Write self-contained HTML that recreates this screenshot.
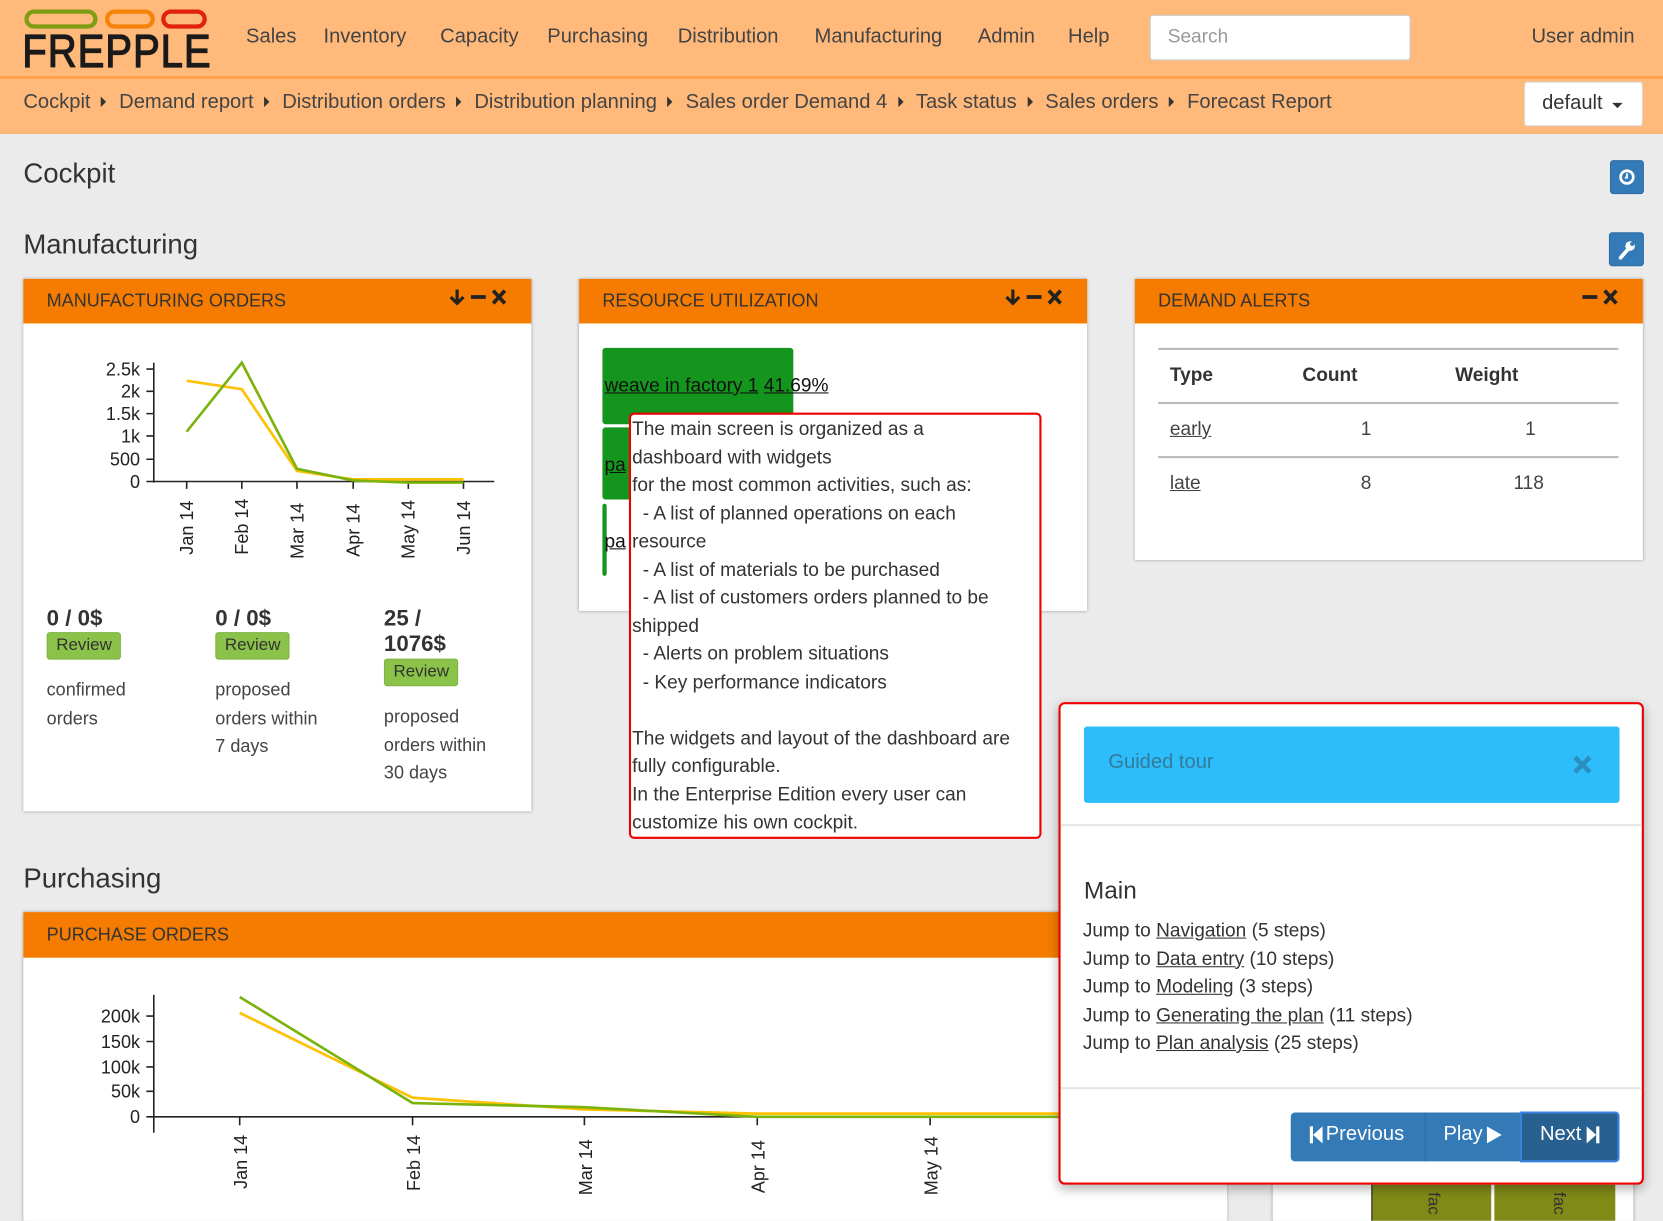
<!DOCTYPE html>
<html><head><meta charset="utf-8"><style>
html,body{margin:0;padding:0;width:1663px;height:1221px;overflow:hidden;background:#ebebeb}
#w{position:absolute;left:0;top:0;width:1568px;height:1151px;overflow:hidden;transform:scale(1.06059);transform-origin:0 0;font-family:"Liberation Sans",sans-serif;color:#333}
.a{position:absolute;white-space:nowrap}
.nav{font-size:19px;color:#444;top:24px}
.bc{font-size:19px;color:#444;top:86px}
.tri{display:inline-block;width:0;height:0;border-top:5px solid transparent;border-bottom:5px solid transparent;border-left:5px solid #333;margin:0 12px 2px 10px;vertical-align:middle}
.wd{position:absolute;background:#fff;box-shadow:0 0 3px rgba(0,0,0,.35)}
.wh{position:absolute;left:0;right:0;top:0;height:42px;background:#f57c00;color:#333;font-size:17px;line-height:42px;padding-left:22px}
.rev{position:absolute;background:#8bc34a;border:1px solid #7cb342;border-radius:3px;font-size:16px;color:#333;padding:3px 8px}
.txt{position:absolute;font-size:17px;line-height:26.5px;color:#444}
.big{position:absolute;font-size:21px;font-weight:bold;color:#333;line-height:24px}
u{text-decoration:underline}
</style></head><body><div id="w">
<div class="a" style="left:0;top:0;width:1568px;height:72px;background:#ffb97a;border-bottom:2px solid #fb9a3c"></div>
<div class="a" style="left:0;top:74px;width:1568px;height:51px;background:#ffb97a;border-bottom:1px solid #f8a45a"></div>
<div class="a" style="left:23px;top:9px;width:69px;height:18px;border:4px solid #7f9d13;border-radius:10px;box-sizing:border-box"></div>
<div class="a" style="left:99px;top:9px;width:47px;height:18px;border:4px solid #f68209;border-radius:10px;box-sizing:border-box"></div>
<div class="a" style="left:152px;top:9px;width:43px;height:18px;border:4px solid #e0210e;border-radius:10px;box-sizing:border-box"></div>
<div class="a" style="left:21px;top:24px;font-size:44px;color:#1a1a1a;letter-spacing:1px;transform:scaleX(0.86);transform-origin:0 0;-webkit-text-stroke:1.2px #1a1a1a">FREPPLE</div>
<div class="a nav" style="left:232px">Sales</div>
<div class="a nav" style="left:305px">Inventory</div>
<div class="a nav" style="left:415px">Capacity</div>
<div class="a nav" style="left:516px">Purchasing</div>
<div class="a nav" style="left:639px">Distribution</div>
<div class="a nav" style="left:768px">Manufacturing</div>
<div class="a nav" style="left:922px">Admin</div>
<div class="a nav" style="left:1007px">Help</div>
<div class="a" style="left:1084px;top:14px;width:246px;height:43px;background:#fff;border:1px solid #ccc;border-radius:3px;box-sizing:border-box"></div>
<div class="a" style="left:1101px;top:24px;font-size:18px;color:#999">Search</div>
<div class="a nav" style="left:1444px">User admin</div>
<div class="a bc" style="left:22px">Cockpit<span class="tri"></span>Demand report<span class="tri"></span>Distribution orders<span class="tri"></span>Distribution planning<span class="tri"></span>Sales order Demand 4<span class="tri"></span>Task status<span class="tri"></span>Sales orders<span class="tri"></span>Forecast Report</div>
<div class="a" style="left:1437px;top:77px;width:112px;height:42px;background:#fff;border:1px solid #ddd;border-radius:3px;box-sizing:border-box"></div>
<div class="a" style="left:1454px;top:87px;font-size:19px;color:#333">default</div>
<div class="a" style="left:1520px;top:97px;width:0;height:0;border-left:5px solid transparent;border-right:5px solid transparent;border-top:5px solid #333"></div>
<div class="a" style="left:22px;top:148px;font-size:26px;color:#333">Cockpit</div>
<div class="a" style="left:1518px;top:151px;width:32px;height:32px;background:#337ab7;border:1px solid #2e6da4;border-radius:3px;box-sizing:border-box"></div>
<svg class="a" style="left:1524px;top:158px" width="20" height="18"><circle cx="10" cy="9" r="6" fill="none" stroke="#fff" stroke-width="2.5"/><path d="M10 5.5V9.5H8" stroke="#fff" stroke-width="1.8" fill="none"/></svg>
<div class="a" style="left:22px;top:215px;font-size:26px;color:#333">Manufacturing</div>
<div class="a" style="left:1517px;top:219px;width:33px;height:32px;background:#337ab7;border:1px solid #2e6da4;border-radius:3px;box-sizing:border-box"></div>
<svg class="a" style="left:1523px;top:225px" width="22" height="22"><path d="M5 18L12 10" stroke="#fff" stroke-width="3.5" stroke-linecap="round"/><circle cx="14" cy="7" r="4.5" fill="#fff"/><circle cx="16" cy="5" r="2" fill="#337ab7"/></svg>

<!-- widget 1 -->
<div class="wd" style="left:22px;top:263px;width:479px;height:502px">
 <div class="wh">MANUFACTURING ORDERS</div>
 <svg class="a" style="left:400px;top:8px" width="60" height="18"><path d="M9 2V15M3 9L9 15L15 9" stroke="#222" stroke-width="3" fill="none"/><path d="M22 9H36" stroke="#222" stroke-width="3.5"/><path d="M43 3L54 15M54 3L43 15" stroke="#222" stroke-width="3.5"/></svg>
 <svg class="a" style="left:0;top:42px" width="479" height="240">
  <g font-size="17" fill="#222" text-anchor="end" font-family="Liberation Sans">
   <text x="110" y="49">2.5k</text><text x="110" y="70">2k</text><text x="110" y="91">1.5k</text><text x="110" y="112">1k</text><text x="110" y="134">500</text><text x="110" y="155">0</text>
  </g>
  <path d="M123 37V150M116 43H123M116 64H123M116 85H123M116 106H123M116 128H123M116 149H444M154 149V156M206 149V156M258 149V156M311 149V156M363 149V156M415 149V156" stroke="#222" stroke-width="1.5" fill="none"/>
  <g font-size="17" fill="#222" font-family="Liberation Sans">
   <text transform="translate(160,218) rotate(-90)">Jan 14</text><text transform="translate(212,218) rotate(-90)">Feb 14</text><text transform="translate(264,222) rotate(-90)">Mar 14</text><text transform="translate(317,220) rotate(-90)">Apr 14</text><text transform="translate(369,222) rotate(-90)">May 14</text><text transform="translate(421,218) rotate(-90)">Jun 14</text>
  </g>
  <polyline points="154,54 206,62 258,139 311,147 363,147 415,147" fill="none" stroke="#ffc000" stroke-width="2.5"/>
  <polyline points="154,102 206,37 258,137 311,148 363,150 415,150" fill="none" stroke="#7cb30b" stroke-width="2.5"/>
 </svg>
 <div class="big" style="left:22px;top:309px">0 / 0$</div>
 <div class="rev" style="left:22px;top:333px">Review</div>
 <div class="txt" style="left:22px;top:375px">confirmed<br>orders</div>
 <div class="big" style="left:181px;top:309px">0 / 0$</div>
 <div class="rev" style="left:181px;top:333px">Review</div>
 <div class="txt" style="left:181px;top:375px">proposed<br>orders within<br>7 days</div>
 <div class="big" style="left:340px;top:309px">25 /<br>1076$</div>
 <div class="rev" style="left:340px;top:358px">Review</div>
 <div class="txt" style="left:340px;top:400px">proposed<br>orders within<br>30 days</div>
</div>

<!-- widget 2 -->
<div class="wd" style="left:546px;top:263px;width:479px;height:313px">
 <div class="wh">RESOURCE UTILIZATION</div>
 <svg class="a" style="left:400px;top:8px" width="60" height="18"><path d="M9 2V15M3 9L9 15L15 9" stroke="#222" stroke-width="3" fill="none"/><path d="M22 9H36" stroke="#222" stroke-width="3.5"/><path d="M43 3L54 15M54 3L43 15" stroke="#222" stroke-width="3.5"/></svg>
 <div class="a" style="left:22px;top:65px;width:180px;height:72px;background:#14961e;border-radius:3px"></div>
 <div class="a" style="left:22px;top:140px;width:40px;height:68px;background:#14961e;border-radius:3px"></div>
 <div class="a" style="left:22px;top:212px;width:4px;height:68px;background:#14961e;border-radius:2px"></div>
 <div class="a" style="left:24px;top:90px;font-size:18px;color:#111"><u>weave in factory 1</u> <u>41.69%</u></div>
 <div class="a" style="left:24px;top:165px;font-size:18px;color:#111"><u>pa</u></div>
 <div class="a" style="left:24px;top:237px;font-size:18px;color:#111"><u>pa</u></div>
</div>

<!-- widget 3 -->
<div class="wd" style="left:1070px;top:263px;width:479px;height:265px">
 <div class="wh">DEMAND ALERTS</div>
 <svg class="a" style="left:420px;top:8px" width="40" height="18"><path d="M2 9H16" stroke="#222" stroke-width="3.5"/><path d="M23 3L34 15M34 3L23 15" stroke="#222" stroke-width="3.5"/></svg>
 <div class="a" style="left:22px;top:65px;width:434px;height:2px;background:#bbb"></div>
 <div class="a" style="left:33px;top:80px;font-size:18px;font-weight:bold">Type</div>
 <div class="a" style="left:158px;top:80px;font-size:18px;font-weight:bold">Count</div>
 <div class="a" style="left:302px;top:80px;font-size:18px;font-weight:bold">Weight</div>
 <div class="a" style="left:22px;top:116px;width:434px;height:2px;background:#bbb"></div>
 <div class="a" style="left:33px;top:131px;font-size:18px;color:#444"><u>early</u></div>
 <div class="a" style="left:213px;top:131px;font-size:18px;color:#444">1</div>
 <div class="a" style="left:368px;top:131px;font-size:18px;color:#444">1</div>
 <div class="a" style="left:22px;top:167px;width:434px;height:2px;background:#bbb"></div>
 <div class="a" style="left:33px;top:182px;font-size:18px;color:#444"><u>late</u></div>
 <div class="a" style="left:213px;top:182px;font-size:18px;color:#444">8</div>
 <div class="a" style="left:357px;top:182px;font-size:18px;color:#444">118</div>
</div>

<!-- Purchasing -->
<div class="a" style="left:22px;top:813px;font-size:26px;color:#333">Purchasing</div>
<div class="wd" style="left:22px;top:860px;width:1135px;height:320px">
 <div class="wh" style="height:43px;line-height:43px">PURCHASE ORDERS</div>
 <svg class="a" style="left:0;top:43px" width="1135" height="260">
  <g font-size="17" fill="#222" text-anchor="end" font-family="Liberation Sans">
   <text x="110" y="61">200k</text><text x="110" y="85">150k</text><text x="110" y="109">100k</text><text x="110" y="132">50k</text><text x="110" y="156">0</text>
  </g>
  <path d="M123 35V165M116 55H123M116 79H123M116 103H123M116 126H123M116 150H990M204 150V158M367 150V158M529 150V158M692 150V158M855 150V158" stroke="#222" stroke-width="1.5" fill="none"/>
  <g font-size="17" fill="#222" font-family="Liberation Sans">
   <text transform="translate(211,218) rotate(-90)">Jan 14</text><text transform="translate(374,220) rotate(-90)">Feb 14</text><text transform="translate(536,224) rotate(-90)">Mar 14</text><text transform="translate(699,222) rotate(-90)">Apr 14</text><text transform="translate(862,224) rotate(-90)">May 14</text>
  </g>
  <polyline points="204,52 367,132 529,143 692,147 990,147" fill="none" stroke="#ffc000" stroke-width="2.5"/>
  <polyline points="204,37 367,137 529,141 692,150 990,150" fill="none" stroke="#7cb30b" stroke-width="2.5"/>
 </svg>
</div>
<div class="wd" style="left:1200px;top:1100px;width:340px;height:80px"></div>
<div class="a" style="left:1293px;top:1117px;width:112px;height:40px;background:#808b17;border-left:1px solid #222"></div>
<div class="a" style="left:1409px;top:1117px;width:114px;height:40px;background:#808b17"></div>
<div class="a" style="left:1360px;top:1124px;font-size:16px;transform:rotate(90deg);transform-origin:0 0">fac</div>
<div class="a" style="left:1478px;top:1124px;font-size:16px;transform:rotate(90deg);transform-origin:0 0">fac</div>

<!-- tooltip -->
<div class="a" style="left:593px;top:389px;width:389px;height:402px;background:#fff;border:2px solid #e00;border-radius:5px;box-sizing:border-box"></div>
<div class="txt" style="left:596px;top:391px;font-size:18px;color:#333;white-space:nowrap">The main screen is organized as a<br>dashboard with widgets<br>for the most common activities, such as:<br>&nbsp;&nbsp;- A list of planned operations on each<br>resource<br>&nbsp;&nbsp;- A list of materials to be purchased<br>&nbsp;&nbsp;- A list of customers orders planned to be<br>shipped<br>&nbsp;&nbsp;- Alerts on problem situations<br>&nbsp;&nbsp;- Key performance indicators<br><br>The widgets and layout of the dashboard are<br>fully configurable.<br>In the Enterprise Edition every user can<br>customize his own cockpit.</div>

<!-- guided tour modal -->
<div class="a" style="left:998px;top:662px;width:552px;height:455px;background:#fff;border:2px solid #e00;border-radius:6px;box-sizing:border-box;box-shadow:0 4px 10px rgba(0,0,0,.3)"></div>
<div class="a" style="left:1022px;top:685px;width:505px;height:72px;background:#2dbdfa;border-radius:3px"></div>
<div class="a" style="left:1045px;top:708px;font-size:19px;color:#337a9a">Guided tour</div>
<svg class="a" style="left:1482px;top:711px" width="20" height="20"><path d="M3 3L17 17M17 3L3 17" stroke="#2a8ec0" stroke-width="4.5"/></svg>
<div class="a" style="left:1000px;top:777px;width:548px;height:2px;background:#e5e5e5"></div>
<div class="a" style="left:1022px;top:826px;font-size:23px;color:#333">Main</div>
<div class="txt" style="left:1021px;top:864px;font-size:18px;color:#333">Jump to <u>Navigation</u> (5 steps)<br>Jump to <u>Data entry</u> (10 steps)<br>Jump to <u>Modeling</u> (3 steps)<br>Jump to <u>Generating the plan</u> (11 steps)<br>Jump to <u>Plan analysis</u> (25 steps)</div>
<div class="a" style="left:1000px;top:1025px;width:548px;height:2px;background:#e5e5e5"></div>
<div class="a" style="left:1217px;top:1049px;width:310px;height:46px;background:#337ab7;border-radius:4px"></div>
<div class="a" style="left:1343px;top:1049px;width:1px;height:46px;background:#2e6da4"></div>
<div class="a" style="left:1433px;top:1048px;width:94px;height:48px;background:#286090;border:2px solid #3b82e0;box-sizing:border-box;border-radius:0 4px 4px 0"></div>
<svg class="a" style="left:1234px;top:1061px" width="14" height="18"><rect x="1" y="1" width="3" height="16" fill="#fff"/><path d="M13 1V17L4 9Z" fill="#fff"/></svg>
<div class="a" style="left:1250px;top:1059px;font-size:19px;color:#fff">Previous</div>
<div class="a" style="left:1361px;top:1059px;font-size:19px;color:#fff">Play</div>
<svg class="a" style="left:1401px;top:1061px" width="16" height="18"><path d="M1 1V17L15 9Z" fill="#fff"/></svg>
<div class="a" style="left:1452px;top:1059px;font-size:19px;color:#fff">Next</div>
<svg class="a" style="left:1495px;top:1061px" width="14" height="18"><path d="M1 1V17L10 9Z" fill="#fff"/><rect x="10" y="1" width="3" height="16" fill="#fff"/></svg>
</div></body></html>
